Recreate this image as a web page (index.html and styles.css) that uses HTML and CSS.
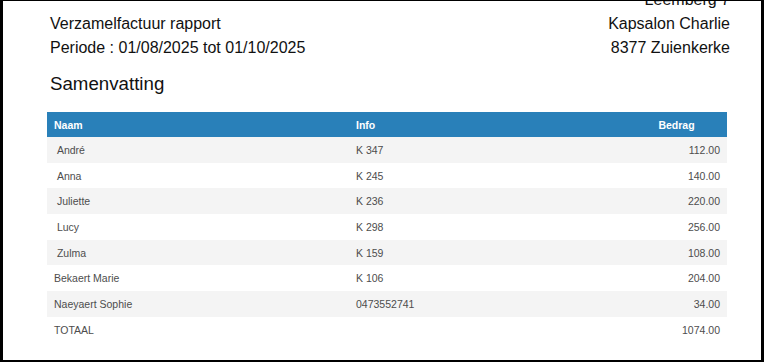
FILE: index.html
```html
<!DOCTYPE html>
<html lang="nl">
<head>
<meta charset="utf-8">
<title>Verzamelfactuur rapport</title>
<link rel="stylesheet" href="styles.css">
</head>
<body>
<div class="paper">
  <div class="report">
    <header class="head">
      <div class="head-left">
        <div>Verzamelfactuur rapport</div>
        <div>Periode : 01/08/2025 tot 01/10/2025</div>
      </div>
      <div class="head-right">
        <div>Leemberg 7</div>
        <div>Kapsalon Charlie</div>
        <div>8377 Zuienkerke</div>
      </div>
    </header>
    <h2 class="section-title">Samenvatting</h2>
    <table class="summary">
      <colgroup>
        <col class="c-name">
        <col class="c-info">
        <col class="c-amount">
      </colgroup>
      <thead>
        <tr><th>Naam</th><th>Info</th><th class="amount-head">Bedrag</th></tr>
      </thead>
      <tbody>
        <tr class="alt"><td>&nbsp;André</td><td>K 347</td><td class="amount">112.00</td></tr>
        <tr><td>&nbsp;Anna</td><td>K 245</td><td class="amount">140.00</td></tr>
        <tr class="alt"><td>&nbsp;Juliette</td><td>K 236</td><td class="amount">220.00</td></tr>
        <tr><td>&nbsp;Lucy</td><td>K 298</td><td class="amount">256.00</td></tr>
        <tr class="alt"><td>&nbsp;Zulma</td><td>K 159</td><td class="amount">108.00</td></tr>
        <tr><td>Bekaert Marie</td><td>K 106</td><td class="amount">204.00</td></tr>
        <tr class="alt"><td>Naeyaert Sophie</td><td>0473552741</td><td class="amount">34.00</td></tr>
        <tr><td>TOTAAL</td><td></td><td class="amount">1074.00</td></tr>
      </tbody>
    </table>
  </div>
</div>
</body>
</html>
```
FILE: styles.css
```css
html, body {
  height: 100%;
}
body {
  margin: 0;
  background: #000;
  padding: 1px 3px 2px 3px;
  box-sizing: border-box;
  font-family: "Liberation Sans", Arial, sans-serif;
}
.paper {
  background: #fff;
  height: 100%;
  overflow: hidden;
}
.report {
  padding: 0 34px 0 44px;
}
.head {
  display: flex;
  justify-content: space-between;
  align-items: flex-end;
  margin: -13.5px -3px 0 3px;
  font-size: 16px;
  line-height: 24px;
  color: #111;
}
.head-right {
  text-align: right;
}
.section-title {
  margin: 12px 0 0 3px;
  font-size: 18.7px;
  line-height: 24px;
  font-weight: normal;
  color: #111;
}
.summary {
  margin-top: 16.5px;
  width: 100%;
  border-collapse: collapse;
  table-layout: fixed;
  font-size: 10.5px;
}
.c-name { width: 302px; }
.c-info { width: 277px; }
.c-amount { width: 101px; }
.summary th {
  background: #2980b9;
  color: #fff;
  font-weight: bold;
  text-align: left;
  height: 25px;
  padding: 0 7px;
}
.summary th.amount-head {
  text-align: center;
}
.summary td {
  height: 25.7px;
  padding: 0 7px;
  color: #4d4d4d;
  white-space: nowrap;
}
.summary td.amount {
  text-align: right;
}
.summary tr.alt td {
  background: #f4f4f4;
}
```
